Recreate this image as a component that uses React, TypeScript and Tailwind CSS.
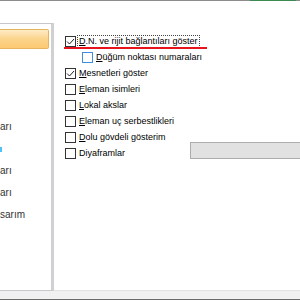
import React from "react";

type Row = {
  label: string;
  checked?: boolean;
  indent?: boolean;
  hover?: boolean;
  focus?: boolean;
  key?: boolean;
};

const rows: Row[] = [
  { label: "D.N. ve rijit bağlantıları göster", checked: true, focus: true, key: true },
  { label: "Düğüm noktası numaraları", indent: true, hover: true, key: true },
  { label: "Mesnetleri göster", checked: true, key: true },
  { label: "Eleman isimleri", key: true },
  { label: "Lokal akslar", key: true },
  { label: "Eleman uç serbestlikleri", key: true },
  { label: "Dolu gövdeli gösterim", key: true },
  { label: "Diyaframlar" },
];

// what is left visible of the tree labels (the panel is scrolled sideways)
const navItems = ["", "", "", "", "arı", "", "arı", "arı", "sarım"];

function CheckBox({ checked, hover }: { checked?: boolean; hover?: boolean }) {
  return (
    <div
      className={
        "w-[11px] h-[11px] shrink-0 bg-white border flex items-center justify-center " +
        (hover ? "border-[#3d8ee0]" : "border-[#333333]")
      }
    >
      {checked && (
        <svg width="9" height="9" viewBox="0 0 9 9">
          <path d="M1 4.5 L3.5 7 L8 2" fill="none" stroke="#222" strokeWidth="1" />
        </svg>
      )}
    </div>
  );
}

function Label({ row }: { row: Row }) {
  const first = row.label[0];
  const rest = row.label.slice(1);
  return (
    <span
      className={
        "px-px leading-[11px] " +
        (row.focus ? "border border-dotted border-[#444]" : "border border-transparent")
      }
    >
      {row.key ? <span className="underline underline-offset-[1px]">{first}</span> : first}
      {rest}
    </span>
  );
}

export default function App() {
  return (
    <div
      className="w-[300px] h-[300px] bg-white flex flex-col overflow-hidden text-[9px] text-black"
      style={{ fontFamily: "'Liberation Sans', Arial, sans-serif" }}
    >
      <div className="h-px flex shrink-0">
        <div className="flex-1 bg-[#8c8c8c]" />
        <div className="w-[46px] bg-[#3d8a55]" />
        <div className="w-[4px] bg-[#8c8c8c]" />
      </div>

      <div className="flex flex-1 min-h-0">
        <div className="w-[54px] shrink-0 pt-[22px] flex flex-col">
          <div className="flex-1 flex flex-col border-t border-b border-[#c8c8cc] border-r-[3px] border-r-[#cfcfd4] pt-[4px] overflow-hidden">
            {navItems.map((item, i) => (
              <div key={i} className="h-[22px] shrink-0 flex items-center text-[10px] text-[#333]">
                {i === 0 ? (
                  <div className="w-[49px] h-[20px] rounded-r-[2px] border border-l-0 border-[#e7b35d] bg-gradient-to-b from-[#fdebc6] via-[#fbd48c] to-[#fcc970]" />
                ) : i === 5 ? (
                  <div className="w-[2px] h-[5px] bg-[#4fc3f7]" />
                ) : (
                  <span className="whitespace-nowrap leading-none">{item}</span>
                )}
              </div>
            ))}
          </div>
        </div>

        <div className="flex-1 flex flex-col border-b border-[#e3e3e3]">
          <div className="flex flex-col pt-[32px] pl-[11px]">
            {rows.map((row, i) => (
              <div key={i} className="flex flex-col">
                <div className={"h-[16px] flex items-center gap-[1px] " + (row.indent ? "pl-[17px]" : "")}>
                  <CheckBox checked={row.checked} hover={row.hover} />
                  <Label row={row} />
                  {i === 7 && (
                    <div className="ml-auto -mt-[6px] w-[110px] h-[17px] bg-[#e1e1e1] border border-[#adadad] border-r-0" />
                  )}
                </div>
                {i === 0 && (
                  <div className="h-[2px] w-[143px] -ml-[1px] -mt-[2px] bg-[#e8141c]" />
                )}
              </div>
            ))}
          </div>
        </div>
      </div>

      <div className="h-[8px] bg-[#f0f0f0] shrink-0" />
      <div className="h-px bg-[#6a6a6a] shrink-0" />
    </div>
  );
}
